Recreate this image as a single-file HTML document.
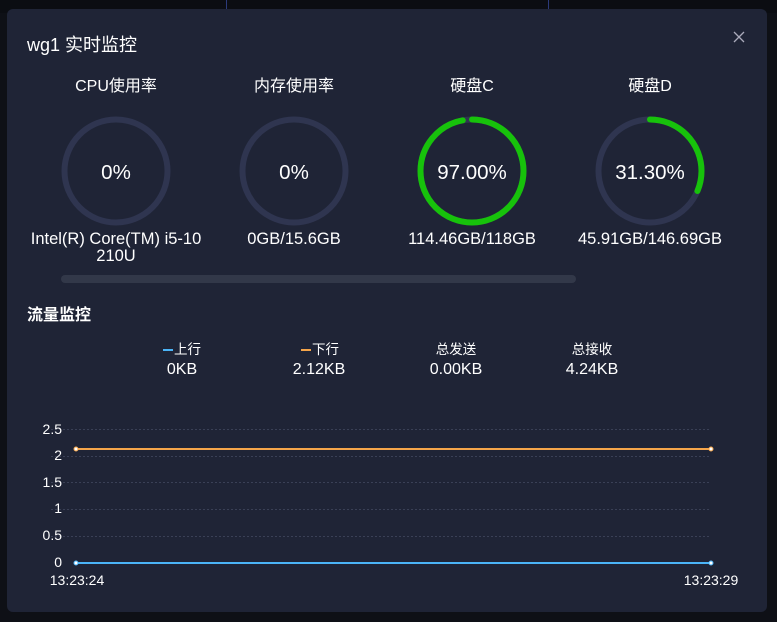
<!DOCTYPE html>
<html><head><meta charset="utf-8"><style>
body{margin:0;width:777px;height:622px;background:#0e1016;font-family:"Liberation Sans","Noto Sans CJK SC",sans-serif;color:#fff;position:relative;overflow:hidden}
.top{position:absolute;left:0;top:0;width:777px;height:13px;background:#0b0d12}
.panel{position:absolute;left:7px;top:9px;width:760px;height:603px;background:#1f2436;border-radius:6px}
.t{position:absolute;white-space:nowrap}
.c{text-align:center;transform:translateX(-50%)}
</style></head><body>
<div class="top"></div>
<div style="position:absolute;left:226px;top:0;width:1px;height:9px;background:#2b3a7a"></div>
<div style="position:absolute;left:548px;top:0;width:1px;height:9px;background:#2b3a7a"></div>
<div class="panel"></div>
<div class="t" style="left:27px;top:31px;font-size:18px">wg1 实时监控</div>
<svg style="position:absolute;left:733px;top:31px" width="12" height="12"><path d="M1 1L11 11M11 1L1 11" stroke="#aab" stroke-width="1.3"/></svg>

<div class="t c" style="left:116px;top:72px;font-size:16px">CPU使用率</div>
<div class="t c" style="left:294px;top:72px;font-size:16px">内存使用率</div>
<div class="t c" style="left:472px;top:72px;font-size:16px">硬盘C</div>
<div class="t c" style="left:650px;top:72px;font-size:16px">硬盘D</div>

<svg style="position:absolute;left:0;top:0" width="777" height="300">
<g fill="none" stroke-width="6">
<circle cx="116" cy="171" r="51.5" stroke="#2f3550"/>
<circle cx="294" cy="171" r="51.5" stroke="#2f3550"/>
<circle cx="472" cy="171" r="51.5" stroke="#2f3550"/>
<circle cx="650" cy="171" r="51.5" stroke="#2f3550"/>
<circle cx="472" cy="171" r="51.5" stroke="#17c20b" stroke-dasharray="313.9 323.6" transform="rotate(-90 472 171)" stroke-linecap="round"/>
<circle cx="650" cy="171" r="51.5" stroke="#17c20b" stroke-dasharray="101.3 323.6" transform="rotate(-90 650 171)" stroke-linecap="round"/>
</g>
<rect x="61" y="275" width="515" height="8" rx="4" fill="#323849"/>
</svg>
<div class="t c" style="left:116px;top:161px;font-size:20.5px">0%</div>
<div class="t c" style="left:294px;top:161px;font-size:20.5px">0%</div>
<div class="t c" style="left:472px;top:161px;font-size:20.5px">97.00%</div>
<div class="t c" style="left:650px;top:161px;font-size:20.5px">31.30%</div>

<div class="t c" style="left:116px;top:231px;font-size:16.5px;line-height:17px">Intel(R) Core(TM) i5-10<br>210U</div>
<div class="t c" style="left:294px;top:231px;font-size:16.5px;line-height:17px">0GB/15.6GB</div>
<div class="t c" style="left:472px;top:231px;font-size:16.5px;line-height:17px">114.46GB/118GB</div>
<div class="t c" style="left:650px;top:231px;font-size:16.5px;line-height:17px">45.91GB/146.69GB</div>

<div class="t" style="left:27px;top:301px;font-size:16px;font-weight:bold">流量监控</div>
<div class="t c" style="left:182px;top:338px;font-size:13.5px"><span style="display:inline-block;width:10px;height:2px;background:#4bb4f7;vertical-align:middle;margin-right:1px"></span>上行</div>
<div class="t c" style="left:320px;top:338px;font-size:13.5px"><span style="display:inline-block;width:10px;height:2px;background:#f5a54a;vertical-align:middle;margin-right:1px"></span>下行</div>
<div class="t c" style="left:456px;top:338px;font-size:13.5px">总发送</div>
<div class="t c" style="left:592px;top:338px;font-size:13.5px">总接收</div>
<div class="t c" style="left:182px;top:361px;font-size:16px">0KB</div>
<div class="t c" style="left:319px;top:361px;font-size:16px">2.12KB</div>
<div class="t c" style="left:456px;top:361px;font-size:16px">0.00KB</div>
<div class="t c" style="left:592px;top:361px;font-size:16px">4.24KB</div>

<svg style="position:absolute;left:0;top:0" width="777" height="622" font-family="Liberation Sans" font-size="14" fill="#fff">
<g stroke="#3a4056" stroke-dasharray="2 2" stroke-width="1">
<line x1="51" y1="429.5" x2="711" y2="429.5"/>
<line x1="51" y1="456.5" x2="711" y2="456.5"/>
<line x1="51" y1="482.5" x2="711" y2="482.5"/>
<line x1="51" y1="509.5" x2="711" y2="509.5"/>
<line x1="51" y1="536.5" x2="711" y2="536.5"/>
</g>
<g text-anchor="end">
<text x="62" y="434">2.5</text><text x="62" y="460">2</text><text x="62" y="487">1.5</text>
<text x="62" y="513">1</text><text x="62" y="540">0.5</text><text x="62" y="567">0</text>
</g>
<line x1="76" y1="449" x2="711" y2="449" stroke="#f5a54a" stroke-width="2"/>
<line x1="76" y1="563" x2="711" y2="563" stroke="#4bb4f7" stroke-width="2"/>
<circle cx="76" cy="449" r="2" fill="#fff" stroke="#f5a54a"/>
<circle cx="711" cy="449" r="2" fill="#fff" stroke="#f5a54a"/>
<circle cx="76" cy="563" r="2" fill="#fff" stroke="#4bb4f7"/>
<circle cx="711" cy="563" r="2" fill="#fff" stroke="#4bb4f7"/>
<text x="77" y="585" text-anchor="middle">13:23:24</text>
<text x="711" y="585" text-anchor="middle">13:23:29</text>
</svg>
</body></html>
